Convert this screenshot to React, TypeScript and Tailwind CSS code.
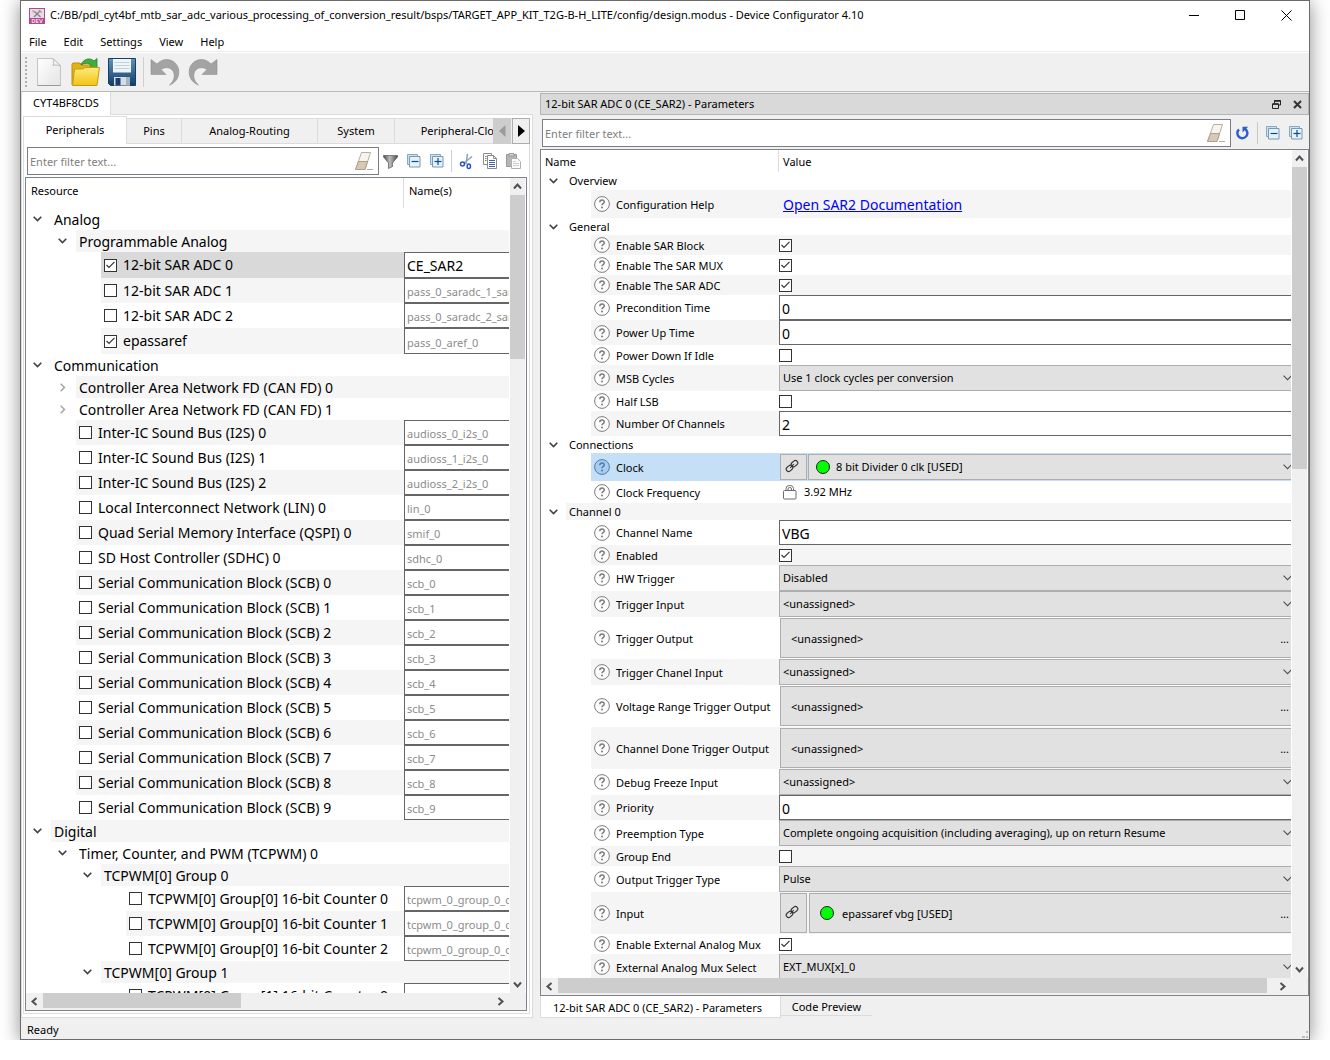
import React, { useId, useState } from 'react'

/* ---------- icons ---------- */

function AppIcon() {
  return (
    <svg width="16" height="16" viewBox="0 0 16 16" aria-hidden="true">
      <rect width="16" height="16" fill="#b04a8c" />
      <path d="M1 1h14v9H1z" fill="#e9dbe5" />
      <path d="M5.500 3.500l6 5.500M11 3L5 9" stroke="#8d8590" strokeWidth="1.500" />
      <path d="M3.500 2.500l2.500 2M10 2l2.500 2.500" stroke="#a59ba6" strokeWidth="1.500" />
      <text x="8" y="15.300" textAnchor="middle" fontSize="6" fontWeight="700" fill="#f3dcea">
        DEV
      </text>
    </svg>
  )
}

function NewFileIcon() {
  return (
    <svg width="26" height="30" viewBox="0 0 26 30" aria-hidden="true">
      <defs>
        <linearGradient id="paper" x1="0" y1="0" x2="1" y2="1">
          <stop offset="0" stopColor="#ffffff" />
          <stop offset="1" stopColor="#e4e4e4" />
        </linearGradient>
      </defs>
      <path d="M1.500 1.500H17l7.500 7.500v19.500h-23z" fill="url(#paper)" stroke="#c4c4c4" />
      <path d="M1.500 28.500h23" stroke="#999" />
      <path d="M17 1.500c1 2.500 1 5 0 7 2-.8 5-.6 7.500.5z" fill="#f6f6f6" stroke="#b9b9b9" />
    </svg>
  )
}

function OpenIcon() {
  return (
    <svg width="29" height="30" viewBox="0 0 29 30" aria-hidden="true">
      <defs>
        <linearGradient id="folder" x1="0" y1="0" x2="0" y2="1">
          <stop offset="0" stopColor="#ffe97a" />
          <stop offset="1" stopColor="#f2c313" />
        </linearGradient>
      </defs>
      <path d="M1 28V7.500l1-1.500h7l1.500 2H25v4" fill="#e0b416" stroke="#b98e10" />
      <path d="M10 8c2-6 9-8 13-4l3-2.500V12h-9l3.500-3.500C17.500 5.500 13 6 10 8z" fill="#3fae3b" stroke="#1f8428" strokeWidth=".8" />
      <path d="M1.500 28.500L3.500 12H12l2-1.500h14.500L26 28.500z" fill="url(#folder)" stroke="#c79a12" />
    </svg>
  )
}

function SaveIcon() {
  return (
    <svg width="28" height="28" viewBox="0 0 28 28" aria-hidden="true">
      <defs>
        <linearGradient id="disk" x1="0" y1="0" x2="0" y2="1">
          <stop offset="0" stopColor="#5f94bb" />
          <stop offset="1" stopColor="#123d68" />
        </linearGradient>
      </defs>
      <path d="M.5.5h27v27H2.500l-2-2z" fill="url(#disk)" stroke="#173f63" />
      <path d="M5 1h18v13.500H5z" fill="#eef4f7" />
      <path d="M6.500 4.500h15M6.500 7.500h15M6.500 10.500h15" stroke="#c3d2da" />
      <path d="M6 19h16v8.500H6z" fill="#d8dde1" />
      <path d="M7.500 20h5v7.500h-5z" fill="#17406f" />
      <path d="M18 19h4v8.500h-4z" fill="#a4b4c1" />
    </svg>
  )
}

function UndoIcon() {
  return (
    <svg width="30" height="28" viewBox="0 0 30 28" aria-hidden="true">
      <path
        d="M1 1.500v15h15l-5-5c5-3.500 11.500-2 13 4 .9 4.500-1 8.500-4.500 11.500 7-2.500 10.500-9 9-16C26.500 2 15-2.500 7 6z"
        fill="#a3a3a3"
        stroke="#8f8f8f"
        strokeWidth=".6"
      />
    </svg>
  )
}

function RedoIcon() {
  return (
    <svg width="30" height="28" viewBox="0 0 30 28" aria-hidden="true">
      <path
        d="M29 1.500v15H14l5-5c-5-3.500-11.500-2-13 4-.9 4.500 1 8.500 4.500 11.500C3.500 24.500 0 18 1.500 11 3.500 2 15-2.500 23 6z"
        fill="#a3a3a3"
        stroke="#8f8f8f"
        strokeWidth=".6"
      />
    </svg>
  )
}

function EraserIcon() {
  return (
    <svg width="20" height="20" viewBox="0 0 20 20" aria-hidden="true">
      <path d="M7.500 1.500h9L11 18.500H1.500z" fill="#f7f3ee" stroke="#b9aea2" />
      <path d="M4.500 10.500h9L11 18.500H1.500z" fill="#d9c8b6" stroke="#b09f8e" />
      <path d="M13 18.500h6" stroke="#b5a898" />
    </svg>
  )
}

function FunnelIcon() {
  return (
    <svg width="15" height="15" viewBox="0 0 15 15" aria-hidden="true">
      <defs>
        <linearGradient id="funnel" x1="0" y1="0" x2="1" y2="0">
          <stop offset="0" stopColor="#4d4d4d" />
          <stop offset=".45" stopColor="#bdbdbd" />
          <stop offset="1" stopColor="#4a4a4a" />
        </linearGradient>
      </defs>
      <path d="M.5 1.500h14v1.500L9.500 9v3.500l-4 2V9L.5 3z" fill="url(#funnel)" stroke="#5a5a5a" strokeWidth=".7" />
    </svg>
  )
}

function BoxesIcon({ plus }: { plus?: boolean }) {
  return (
    <svg width="14" height="14" viewBox="0 0 14 14" aria-hidden="true">
      <path d="M.5.5h10v10H.5z" fill="#c5e4f5" stroke="#8fa6bd" />
      <path d="M2.500 2.500h10.500v10.500H2.500z" fill="#e3f3fc" stroke="#7f96b0" />
      <path d="M4.500 7.500h7" stroke="#0f4c86" strokeWidth="1.200" />
      {plus && <path d="M8 4v7" stroke="#0f4c86" strokeWidth="1.200" />}
    </svg>
  )
}

function CutIcon() {
  return (
    <svg width="15" height="17" viewBox="0 0 15 17" aria-hidden="true">
      <path d="M8.500 1l-1.500 10" stroke="#8fa3bd" strokeWidth="1.600" />
      <path d="M13 3.500L4.500 10.500" stroke="#8fa3bd" strokeWidth="1.600" />
      <circle cx="3.500" cy="11" r="2" fill="none" stroke="#2a56c0" strokeWidth="1.500" />
      <ellipse cx="9.800" cy="13.300" rx="1.700" ry="2.300" fill="none" stroke="#2a56c0" strokeWidth="1.500" />
    </svg>
  )
}

function CopyIcon() {
  return (
    <svg width="14" height="16" viewBox="0 0 14 16" aria-hidden="true">
      <path d="M.5.5h8v11h-8z" fill="#fff" stroke="#8a8a8a" />
      <path d="M2 3.500h1.500M2 5.500h1.500M2 7.500h1.500" stroke="#777" />
      <path d="M4.500 2.500h6l3 3v10h-9z" fill="#fff" stroke="#8a8a8a" />
      <path d="M10.500 2.500v3h3" fill="none" stroke="#8a8a8a" />
      <path d="M6 7.500h6M6 9.500h6M6 11.500h6M6 13.500h6" stroke="#3b5ea8" />
    </svg>
  )
}

function PasteIcon() {
  return (
    <svg width="15" height="16" viewBox="0 0 15 16" aria-hidden="true">
      <path d="M.5 1.500h10v12H.5z" fill="#b5b5b5" stroke="#9a9a9a" />
      <path d="M3 .5h5v2.500H3z" fill="#d5d5d5" stroke="#9a9a9a" />
      <path d="M5.500 5.500h6l3 3v7h-9z" fill="#fbfbfb" stroke="#b0b0b0" />
      <path d="M7 8.500h3M7 10.500h6M7 12.500h6" stroke="#cfcfcf" />
    </svg>
  )
}

function ReloadIcon() {
  return (
    <svg width="13" height="14" viewBox="0 0 13 14" aria-hidden="true">
      <path d="M3 3.500a5 5 0 1 0 5.500-.8" fill="none" stroke="#2c5fcb" strokeWidth="2.400" />
      <path d="M6.500 6.500V.8h5.700z" fill="#2c5fcb" />
    </svg>
  )
}

function HelpIcon({ selected }: { selected?: boolean }) {
  return (
    <svg
      width="16"
      height="16"
      viewBox="0 0 16 16"
      aria-hidden="true"
      className={selected ? 'shrink-0 text-[#4f7ba8]' : 'shrink-0 text-[#7d7d7d]'}
    >
      <circle cx="8" cy="8" r="7.400" fill={selected ? '#a7cdf0' : '#fdfdfd'} stroke="currentColor" />
      <path d="M5.800 6.200c0-3 4.400-3 4.400-.3 0 1.600-2.200 1.700-2.200 3.300" fill="none" stroke="currentColor" strokeWidth="1.500" />
      <circle cx="8" cy="11.500" r="1" fill="currentColor" />
    </svg>
  )
}

function LinkIcon() {
  return (
    <svg width="14" height="14" viewBox="0 0 14 14" fill="none" stroke="#333" strokeWidth="1.100" aria-hidden="true">
      <rect x="6" y="2.200" width="7" height="4.800" rx="2.400" transform="rotate(-40 9.500 4.600)" />
      <rect x="1" y="7" width="7" height="4.800" rx="2.400" transform="rotate(-40 4.500 9.400)" />
      <path d="M5.200 8.800l3.600-3.600" />
    </svg>
  )
}

function LockIcon() {
  return (
    <svg width="14" height="15" viewBox="0 0 14 15" fill="none" stroke="#6d6d6d" aria-hidden="true">
      <rect x=".5" y="5.500" width="12.500" height="8.500" rx="1" />
      <path d="M3 5.500V3.500a3.700 3 0 0 1 7.500 0v2M5 5.500V4a1.700 1.500 0 0 1 3.500 0v1.500" />
    </svg>
  )
}

function Dot() {
  return (
    <svg width="14" height="14" viewBox="0 0 14 14" className="shrink-0" aria-hidden="true">
      <circle cx="7" cy="7" r="6.500" fill="#00ff00" stroke="#222" />
    </svg>
  )
}

function TreeArrow({ open }: { open: boolean }) {
  return open ? (
    <svg width="9" height="6" viewBox="0 0 9 6" aria-hidden="true">
      <path d="M.7 .7l3.800 3.800L8.300.7" fill="none" stroke="#404040" strokeWidth="1.600" />
    </svg>
  ) : (
    <svg width="6" height="9" viewBox="0 0 6 9" aria-hidden="true">
      <path d="M.7 .7l3.800 3.800L.7 8.300" fill="none" stroke="#a0a0a0" strokeWidth="1.400" />
    </svg>
  )
}

const ARROWS = {
  up: 'M1 6.500l3.500-4 3.500 4',
  down: 'M1 2.500l3.500 4 3.500-4',
  left: 'M6.500 1l-4 3.500 4 3.500',
  right: 'M2.500 1l4 3.500-4 3.500',
}

function ScrollArrow({ dir, className }: { dir: keyof typeof ARROWS; className: string }) {
  return (
    <button type="button" aria-label={'Scroll ' + dir} className={'flex shrink-0 items-center justify-center ' + className}>
      <svg width="9" height="9" viewBox="0 0 9 9" aria-hidden="true">
        <path d={ARROWS[dir]} fill="none" stroke="#505050" strokeWidth="2" />
      </svg>
    </button>
  )
}

/* ---------- shared controls ---------- */

function Check({ id, checked: initial, label }: { id?: string; checked?: boolean; label?: string }) {
  const [checked, setChecked] = useState(!!initial)
  return (
    <span className="grid h-[13px] w-[13px] shrink-0 place-items-center">
      <input
        id={id}
        type="checkbox"
        aria-label={label}
        checked={checked}
        onChange={(e) => setChecked(e.target.checked)}
        className="col-start-1 row-start-1 h-[13px] w-[13px] appearance-none border border-[#333] bg-white"
      />
      {checked && (
        <svg width="9" height="8" viewBox="0 0 9 8" className="pointer-events-none col-start-1 row-start-1" aria-hidden="true">
          <path d="M.5 4l2.500 2.500L8.500.8" fill="none" stroke="#333" strokeWidth="1.200" />
        </svg>
      )}
    </span>
  )
}

function FilterBox({ label }: { label: string }) {
  return (
    <div className="flex h-7 min-w-0 flex-1 items-center border border-[#7a7d86] bg-white pr-1">
      <input type="text" aria-label={label} placeholder="Enter filter text..." className="h-full min-w-0 flex-1 px-[2px] outline-none placeholder:text-[#808080]" />
      <button type="button" aria-label="Clear filter">
        <EraserIcon />
      </button>
    </div>
  )
}

function Scrollers({ children, vThumb, hThumb }: { children: React.ReactNode; vThumb: string; hThumb: string }) {
  return (
    <div className="flex min-h-0 flex-1 flex-col border border-[#7f838c] bg-white">
      <div className="flex min-h-0 flex-1">
        <div className="min-w-0 flex-1 overflow-hidden">{children}</div>
        <div className="mx-px flex w-[15px] shrink-0 flex-col bg-[#f0f0f0]">
          <ScrollArrow dir="up" className="h-[17px]" />
          <div className="min-h-0 flex-1">
            <div className={vThumb} />
          </div>
          <ScrollArrow dir="down" className="h-[17px]" />
        </div>
      </div>
      <div className="flex h-[17px] shrink-0 bg-[#f0f0f0] pr-[17px]">
        <ScrollArrow dir="left" className="w-[17px]" />
        <div className="min-w-0 flex-1">
          <div className={hThumb} />
        </div>
        <ScrollArrow dir="right" className="w-[17px]" />
      </div>
    </div>
  )
}

const ROW_H: Record<number, string> = {
  17: 'h-[17px]',
  18: 'h-[18px]',
  20: 'h-5',
  22: 'h-[22px]',
  25: 'h-[25px]',
  26: 'h-[26px]',
  28: 'h-7',
  42: 'h-[42px]',
}

/* ---------- resource tree ---------- */

type Resource = { depth: number; label: string; h: number; name?: string; value?: string; checked?: boolean; closed?: boolean; selected?: boolean }

const group = (depth: number, label: string, closed = false): Resource => ({ depth, label, h: 22, closed })
const leaf = (depth: number, label: string, name: string, h = 25, checked = false): Resource => ({ depth, label, name, h, checked })

const RESOURCES: Resource[] = [
  group(0, 'Analog'),
  group(1, 'Programmable Analog'),
  { depth: 2, label: '12-bit SAR ADC 0', name: '', value: 'CE_SAR2', h: 26, checked: true, selected: true },
  leaf(2, '12-bit SAR ADC 1', 'pass_0_saradc_1_sar_0'),
  leaf(2, '12-bit SAR ADC 2', 'pass_0_saradc_2_sar_0'),
  leaf(2, 'epassaref', 'pass_0_aref_0', 26, true),
  group(0, 'Communication'),
  group(1, 'Controller Area Network FD (CAN FD) 0', true),
  group(1, 'Controller Area Network FD (CAN FD) 1', true),
  leaf(1, 'Inter-IC Sound Bus (I2S) 0', 'audioss_0_i2s_0'),
  leaf(1, 'Inter-IC Sound Bus (I2S) 1', 'audioss_1_i2s_0'),
  leaf(1, 'Inter-IC Sound Bus (I2S) 2', 'audioss_2_i2s_0'),
  leaf(1, 'Local Interconnect Network (LIN) 0', 'lin_0'),
  leaf(1, 'Quad Serial Memory Interface (QSPI) 0', 'smif_0'),
  leaf(1, 'SD Host Controller (SDHC) 0', 'sdhc_0'),
  ...[0, 1, 2, 3, 4, 5, 6, 7, 8, 9].map((n) => leaf(1, 'Serial Communication Block (SCB) ' + n, 'scb_' + n)),
  group(0, 'Digital'),
  group(1, 'Timer, Counter, and PWM (TCPWM) 0'),
  group(2, 'TCPWM[0] Group 0'),
  leaf(3, 'TCPWM[0] Group[0] 16-bit Counter 0', 'tcpwm_0_group_0_cnt_0'),
  leaf(3, 'TCPWM[0] Group[0] 16-bit Counter 1', 'tcpwm_0_group_0_cnt_1'),
  leaf(3, 'TCPWM[0] Group[0] 16-bit Counter 2', 'tcpwm_0_group_0_cnt_2'),
  group(2, 'TCPWM[0] Group 1'),
  leaf(3, 'TCPWM[0] Group[1] 16-bit Counter 0', 'tcpwm_0_group_1_cnt_0'),
]

const INDENT = ['w-[25px]', 'w-[50px]', 'w-[75px]', 'w-[100px]']

function ResourceRow({ row, index }: { row: Resource; index: number }) {
  const id = useId()
  const isLeaf = row.name !== undefined
  const bg = row.selected ? 'bg-[#d9d9d9]' : index % 2 ? 'bg-[#f5f5f5]' : 'bg-white'
  return (
    <tr>
      <td className="p-0">
        <div className={'flex ' + ROW_H[row.h]}>
          <div className={'flex shrink-0 items-center justify-end pr-2 ' + INDENT[row.depth]}>
            {!isLeaf && (
              <button type="button" aria-label={(row.closed ? 'Expand ' : 'Collapse ') + row.label} className="flex w-[11px] justify-center">
                <TreeArrow open={!row.closed} />
              </button>
            )}
          </div>
          <div className={'flex min-w-0 flex-1 items-center gap-[6px] pl-[3px] text-sm leading-5 whitespace-nowrap ' + bg}>
            {isLeaf && <Check id={id} checked={row.checked} />}
            {isLeaf ? <label htmlFor={id}>{row.label}</label> : <span className="pt-[2px]">{row.label}</span>}
          </div>
        </div>
      </td>
      <td className={'p-0 ' + (row.selected ? 'bg-white' : bg)}>
        <div className={'flex ' + ROW_H[row.h]}>
          {isLeaf && (
            <input
              type="text"
              aria-label={'Name of ' + row.label}
              defaultValue={row.value}
              placeholder={row.name}
              className={
                'h-full w-full border-y border-l border-[#666] bg-white pl-[2px] outline-none placeholder:text-[#8c8c8c] ' +
                (row.value ? 'text-sm' : 'pt-[2px] text-[11px]')
              }
            />
          )}
        </div>
      </td>
    </tr>
  )
}

const TABS = [
  ['Pins', 'w-[55px]'],
  ['Analog-Routing', 'w-[136px]'],
  ['System', 'w-[77px]'],
  ['Peripheral-Clocks', 'w-[142px]'],
]

function ResourcePanel() {
  return (
    <section className="flex w-[512px] shrink-0 flex-col">
      <div role="tablist" aria-label="Devices" className="flex">
        <button type="button" role="tab" aria-selected="true" className="z-10 -mb-px h-[23px] w-[90px] border-r border-l border-[#dcdcdc] bg-white">
          CYT4BF8CDS
        </button>
      </div>
      <div className="flex min-h-0 flex-1 flex-col border border-[#dcdcdc] bg-white pt-px pr-[2px] pb-[3px] pl-px">
        <div className="relative flex overflow-hidden">
          <div role="tablist" aria-label="Sections" className="flex min-w-0 flex-1 items-end overflow-hidden">
            <button type="button" role="tab" aria-selected="true" className="h-7 w-[104px] shrink-0 border border-b-0 border-[#dcdcdc] bg-white">
              Peripherals
            </button>
            {TABS.map(([label, width]) => (
              <button key={label} type="button" role="tab" className={'h-[26px] shrink-0 border-y border-r border-[#dcdcdc] bg-[#f0f0f0] ' + width}>
                {label}
              </button>
            ))}
          </div>
          <div className="absolute top-[2px] right-0 flex gap-px">
            <button type="button" aria-label="Previous tabs" disabled className="flex h-[26px] w-[18px] items-center justify-center bg-[#cdcdcd]">
              <svg width="7" height="12" viewBox="0 0 7 12" aria-hidden="true">
                <path d="M6.500 0v12L0 6z" fill="#9b9b9b" />
              </svg>
            </button>
            <button type="button" aria-label="Next tabs" className="flex h-[26px] w-[18px] items-center justify-center border border-[#adadad] bg-[#f0f0f0]">
              <svg width="7" height="12" viewBox="0 0 7 12" aria-hidden="true">
                <path d="M0 0v12l7-6z" fill="#000" />
              </svg>
            </button>
          </div>
        </div>
        <div className="flex min-h-0 flex-1 flex-col border-r border-b border-l border-[#dcdcdc] pr-[2px] pb-[2px] pl-px">
          <div className="flex items-center pt-[3px] pr-[6px] pb-[2px] pl-[2px]">
            <FilterBox label="Filter resources" />
            <div className="ml-1 flex items-center gap-[9px]">
              <button type="button" aria-label="Filter">
                <FunnelIcon />
              </button>
              <button type="button" aria-label="Collapse all">
                <BoxesIcon />
              </button>
              <button type="button" aria-label="Expand all">
                <BoxesIcon plus />
              </button>
              <div className="-mx-[2px] h-[22px] border-l border-[#d0d0d0]" />
              <button type="button" aria-label="Cut">
                <CutIcon />
              </button>
              <button type="button" aria-label="Copy">
                <CopyIcon />
              </button>
              <button type="button" aria-label="Paste">
                <PasteIcon />
              </button>
            </div>
          </div>
          <Scrollers vThumb="h-[21%] bg-[#cdcdcd]" hThumb="h-[15px] w-[44%] bg-[#cdcdcd]">
            <table className="w-full table-fixed border-collapse">
              <colgroup>
                <col className="w-[378px]" />
                <col />
              </colgroup>
              <thead>
                <tr className="text-left">
                  <th className="p-0 font-normal">
                    <div className="h-[30px] border-r border-[#dcdcdc] pt-[5px] pl-[5px] leading-4">Resource</div>
                  </th>
                  <th className="p-0 font-normal">
                    <div className="h-[30px] pt-[5px] pl-[5px] leading-4">Name(s)</div>
                  </th>
                </tr>
              </thead>
              <tbody>
                {RESOURCES.map((r, i) => (
                  <ResourceRow key={i} row={r} index={i} />
                ))}
              </tbody>
            </table>
          </Scrollers>
        </div>
      </div>
    </section>
  )
}

/* ---------- parameters ---------- */

type Param = {
  label: string
  h: number
  kind: 'group' | 'link' | 'check' | 'text' | 'select' | 'browse' | 'clock' | 'input' | 'locked'
  value?: string
  checked?: boolean
}

const head = (label: string, h = 17): Param => ({ label, h, kind: 'group' })
const check = (label: string, checked = false): Param => ({ label, h: 20, kind: 'check', checked })
const text = (label: string, value: string): Param => ({ label, h: 25, kind: 'text', value })
const select = (label: string, value: string): Param => ({ label, h: 26, kind: 'select', value })
const browse = (label: string): Param => ({ label, h: 42, kind: 'browse', value: '<unassigned>' })

const PARAMS: Param[] = [
  head('Overview', 18),
  { label: 'Configuration Help', h: 28, kind: 'link', value: 'Open SAR2 Documentation' },
  head('General'),
  check('Enable SAR Block', true),
  check('Enable The SAR MUX', true),
  check('Enable The SAR ADC', true),
  text('Precondition Time', '0'),
  text('Power Up Time', '0'),
  check('Power Down If Idle'),
  select('MSB Cycles', 'Use 1 clock cycles per conversion'),
  check('Half LSB'),
  text('Number Of Channels', '2'),
  head('Connections'),
  { label: 'Clock', h: 28, kind: 'clock', value: '8 bit Divider 0 clk [USED]' },
  { label: 'Clock Frequency', h: 22, kind: 'locked', value: '3.92 MHz' },
  head('Channel 0'),
  text('Channel Name', 'VBG'),
  check('Enabled', true),
  select('HW Trigger', 'Disabled'),
  select('Trigger Input', '<unassigned>'),
  browse('Trigger Output'),
  select('Trigger Chanel Input', '<unassigned>'),
  browse('Voltage Range Trigger Output'),
  browse('Channel Done Trigger Output'),
  select('Debug Freeze Input', '<unassigned>'),
  text('Priority', '0'),
  select('Preemption Type', 'Complete ongoing acquisition (including averaging), up on return Resume'),
  check('Group End'),
  select('Output Trigger Type', 'Pulse'),
  { label: 'Input', h: 42, kind: 'input', value: 'epassaref vbg [USED]' },
  check('Enable External Analog Mux', true),
  select('External Analog Mux Select', 'EXT_MUX[x]_0'),
]

function Combo({ id, value, dot }: { id: string; value: string; dot?: boolean }) {
  return (
    <div className="grid h-full min-w-0 flex-1 items-center">
      <select
        id={id}
        defaultValue={value}
        className={
          'col-start-1 row-start-1 h-full w-full min-w-0 appearance-none border-y border-l border-[#adadad] bg-[#e1e1e1] pt-px outline-none ' +
          (dot ? 'pl-[27px]' : 'pl-[3px]')
        }
      >
        <option>{value}</option>
      </select>
      {dot && (
        <span className="pointer-events-none col-start-1 row-start-1 pl-2">
          <Dot />
        </span>
      )}
      <svg width="9" height="6" viewBox="0 0 9 6" className="pointer-events-none col-start-1 row-start-1 -mr-px justify-self-end" aria-hidden="true">
        <path d="M.5.7l4 4 4-4" fill="none" stroke="#505050" strokeWidth="1.100" />
      </svg>
    </div>
  )
}

function LinkButton({ label }: { label: string }) {
  return (
    <button type="button" aria-label={'Go to ' + label} className="flex w-[27px] shrink-0 items-center justify-center border border-[#adadad] bg-[#e1e1e1] pr-[3px] pb-[2px]">
      <LinkIcon />
    </button>
  )
}

function ParamValue({ row, id }: { row: Param; id: string }) {
  const value = row.value ?? ''
  switch (row.kind) {
    case 'check':
      return <Check id={id} checked={row.checked} />
    case 'text':
      return <input id={id} type="text" defaultValue={value} className="h-full w-full border-y border-l border-[#666] bg-white pt-px pl-[2px] text-sm outline-none" />
    case 'select':
      return <Combo id={id} value={value} />
    case 'link':
      return (
        <a href="#sar2" className="pt-px pl-1 text-sm text-[#0000ff] underline">
          {value}
        </a>
      )
    case 'locked':
      return (
        <span className="flex items-center gap-[7px] pl-1">
          <LockIcon />
          {value}
        </span>
      )
    case 'clock':
      return (
        <div className="flex h-full min-w-0 flex-1 gap-px py-px pl-px">
          <LinkButton label={row.label} />
          <Combo id={id} value={value} dot />
        </div>
      )
    case 'browse':
    case 'input':
      return (
        <div className="flex h-full min-w-0 flex-1 gap-[2px] py-px pl-px">
          {row.kind === 'input' && <LinkButton label={row.label} />}
          <button id={id} type="button" className="flex min-w-0 flex-1 items-center border-y border-l border-[#adadad] bg-[#e1e1e1] pr-[2px] pl-[10px] text-left">
            {row.kind === 'input' && (
              <span className="mr-2">
                <Dot />
              </span>
            )}
            <span className="min-w-0 flex-1 truncate pt-[2px]">{value}</span>
            <span className="pt-[2px]">...</span>
          </button>
        </div>
      )
    default:
      return null
  }
}

function ParamRow({ row, index }: { row: Param; index: number }) {
  const id = useId()
  const selected = row.kind === 'clock'
  const bg = selected ? 'bg-[#c5dff6]' : index % 2 ? 'bg-[#f5f5f5]' : 'bg-white'
  const height = ROW_H[row.h]
  if (row.kind === 'group') {
    return (
      <tr>
        <td colSpan={2} className="p-0">
          <div className={'flex leading-4 ' + height}>
            <div className="flex w-6 shrink-0 items-center justify-center">
              <button type="button" aria-label={'Collapse ' + row.label}>
                <TreeArrow open />
              </button>
            </div>
            <div className={'ml-px flex flex-1 items-center pl-[3px] ' + bg}>{row.label}</div>
          </div>
        </td>
      </tr>
    )
  }
  return (
    <tr>
      <td className="p-0">
        <div className={'flex pl-[50px] leading-4 ' + height}>
          <div className={'flex min-w-0 flex-1 items-center gap-[6px] pl-[3px] whitespace-nowrap ' + bg}>
            <HelpIcon selected={selected} />
            <label htmlFor={id} className="pt-px">
              {row.label}
            </label>
          </div>
        </div>
      </td>
      <td className={'p-0 ' + bg}>
        <div className={'flex items-center ' + height}>
          <ParamValue row={row} id={id} />
        </div>
      </td>
    </tr>
  )
}

function ParameterPanel() {
  return (
    <section className="flex min-w-0 flex-1 flex-col pt-px">
      <header className="flex h-[22px] items-center border border-[#b4b4b4] bg-[#d9d9d9] pr-[6px] pl-1">
        <h2 className="flex-1 pt-px">12-bit SAR ADC 0 (CE_SAR2) - Parameters</h2>
        <button type="button" aria-label="Float panel" className="mr-3">
          <svg width="9" height="9" viewBox="0 0 9 9" fill="none" stroke="#222" aria-hidden="true">
            <path d="M2.500 3V.5h6v4.500H6.500M.5 4h6v4.500h-6z" />
            <path d="M2.500 1h6M.5 4h6" strokeWidth="1.600" />
          </svg>
        </button>
        <button type="button" aria-label="Close panel">
          <svg width="9" height="9" viewBox="0 0 9 9" aria-hidden="true">
            <path d="M1 1l7 7M8 1L1 8" stroke="#333" strokeWidth="2" />
          </svg>
        </button>
      </header>
      <div className="flex items-center pt-1 pr-[6px] pb-[2px] pl-[2px]">
        <FilterBox label="Filter parameters" />
        <div className="ml-[5px] flex items-center gap-[9px]">
          <button type="button" aria-label="Reset">
            <ReloadIcon />
          </button>
          <div className="mx-[-1px] h-[22px] border-l border-[#c8c8c8]" />
          <button type="button" aria-label="Collapse all">
            <BoxesIcon />
          </button>
          <button type="button" aria-label="Expand all">
            <BoxesIcon plus />
          </button>
        </div>
      </div>
      <Scrollers vThumb="h-[38%] bg-[#cdcdcd]" hThumb="h-[15px] w-[99%] bg-[#cdcdcd]">
        <table className="w-full table-fixed border-collapse">
          <colgroup>
            <col className="w-[238px]" />
            <col />
          </colgroup>
          <thead>
            <tr className="text-left">
              <th className="p-0 font-normal">
                <div className="h-[22px] border-r border-[#dcdcdc] pt-1 pl-1 leading-4">Name</div>
              </th>
              <th className="p-0 font-normal">
                <div className="h-[22px] pt-1 pl-1 leading-4">Value</div>
              </th>
            </tr>
          </thead>
          <tbody>
            {PARAMS.map((p, i) => (
              <ParamRow key={p.label} row={p} index={i} />
            ))}
          </tbody>
        </table>
      </Scrollers>
      <div role="tablist" aria-label="Panels" className="flex h-[22px] shrink-0 items-start">
        <button type="button" role="tab" aria-selected="true" className="h-[22px] w-[241px] border-x border-b border-[#dcdcdc] bg-white pt-[3px] pr-[6px]">
          12-bit SAR ADC 0 (CE_SAR2) - Parameters
        </button>
        <button type="button" role="tab" className="h-5 w-[91px] border-b border-[#dcdcdc] pt-[3px]">
          Code Preview
        </button>
      </div>
    </section>
  )
}

/* ---------- window ---------- */

export default function App() {
  return (
    <div className="flex h-screen flex-col bg-white pb-5 font-['Noto_Sans','Open_Sans',sans-serif] text-[11px] text-black">
      <div className="flex min-h-0 flex-1 overflow-hidden px-5">
        <main className="flex min-w-0 flex-1 flex-col border border-[#6b6b6b] bg-[#f0f0f0] shadow-[0_2px_18px_rgba(0,0,0,0.45)]">
          <header className="flex h-[30px] shrink-0 items-center bg-white pb-px pl-2">
            <AppIcon />
            <h1 className="ml-[5px] flex-1 truncate text-[11px]">
              C:/BB/pdl_cyt4bf_mtb_sar_adc_various_processing_of_conversion_result/bsps/TARGET_APP_KIT_T2G-B-H_LITE/config/design.modus - Device Configurator 4.10
            </h1>
            <div className="flex">
              <button type="button" aria-label="Minimize" className="flex w-[46px] justify-center">
                <svg width="11" height="11" viewBox="0 0 11 11" aria-hidden="true">
                  <path d="M0 5.500h10" stroke="#000" />
                </svg>
              </button>
              <button type="button" aria-label="Maximize" className="flex w-[46px] justify-center">
                <svg width="10" height="10" viewBox="0 0 10 10" aria-hidden="true">
                  <path d="M.5.5h9v9h-9z" fill="none" stroke="#000" />
                </svg>
              </button>
              <button type="button" aria-label="Close" className="flex w-[46px] justify-center">
                <svg width="11" height="11" viewBox="0 0 11 11" aria-hidden="true">
                  <path d="M.5.5l10 10M10.500.5l-10 10" stroke="#000" />
                </svg>
              </button>
            </div>
          </header>
          <nav className="flex h-[21px] shrink-0 items-center gap-[17px] border-b border-[#ececec] bg-white pt-[2px] pl-2">
            <button type="button">File</button>
            <button type="button">Edit</button>
            <button type="button">Settings</button>
            <button type="button">View</button>
            <button type="button">Help</button>
          </nav>
          <div className="flex h-10 shrink-0 items-center border-t border-b border-t-white border-b-[#b9b9b9] pl-1">
            <div className="mr-[9px] h-[30px] border-l-2 border-dotted border-[#b0b0b0]" />
            <button type="button" aria-label="New">
              <NewFileIcon />
            </button>
            <button type="button" aria-label="Open" className="ml-[9px]">
              <OpenIcon />
            </button>
            <button type="button" aria-label="Save" className="ml-2">
              <SaveIcon />
            </button>
            <div className="mr-[6px] ml-[7px] h-[30px] border-l border-[#cfcfcf]" />
            <button type="button" aria-label="Undo">
              <UndoIcon />
            </button>
            <button type="button" aria-label="Redo" className="ml-2">
              <RedoIcon />
            </button>
          </div>
          <div className="flex min-h-0 flex-1 gap-[7px]">
            <ResourcePanel />
            <ParameterPanel />
          </div>
          <footer className="flex h-[21px] shrink-0 items-center pl-[6px]">
            <span className="flex-1 pt-[3px]">Ready</span>
            <svg width="8" height="8" viewBox="0 0 8 8" className="self-end" fill="#bdbdbd" aria-hidden="true">
              <path d="M5 0h2v2H5zM5 5h2v2H5zM1 5h3v2H1z" />
            </svg>
          </footer>
        </main>
      </div>
    </div>
  )
}
